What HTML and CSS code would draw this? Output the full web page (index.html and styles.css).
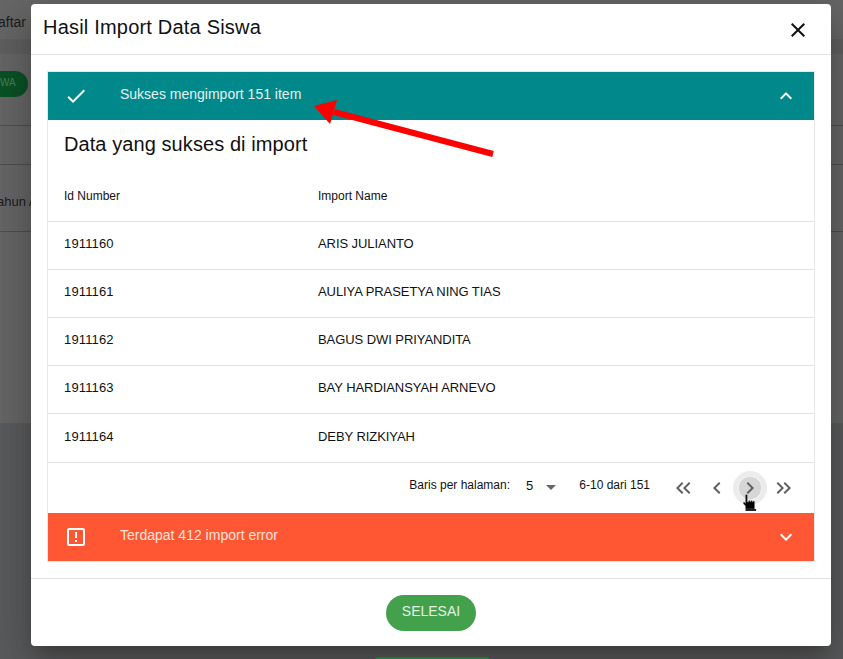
FILE: index.html
```html
<!DOCTYPE html>
<html lang="id">

<head>
    <meta charset="UTF-8">
    <title>Hasil Import Data Siswa</title>
    <link rel="stylesheet" href="styles.css">
</head>

<body>
    <div class="page">
        <div class="page-tabs"><span class="tab-label">aftar S</span></div>
        <div class="page-actions"><span class="pill">WA</span></div>
        <div class="page-row"></div>
        <div class="page-row page-row-text"><span class="row-label">ahun A</span></div>
        <div class="page-fill"></div>
    </div>
    <div class="page-bottom-btn"></div>

    <div class="modal">
        <div class="modal-header">
            <h2>Hasil Import Data Siswa</h2>
            <svg class="close-icon" width="24" height="24" viewBox="0 0 24 24">
                <path d="M19 6.41 17.59 5 12 10.59 6.41 5 5 6.41 10.59 12 5 17.59 6.41 19 12 13.41 17.59 19 19 17.59 13.41 12z" />
            </svg>
        </div>

        <div class="modal-body">
            <div class="accordion">
                <div class="acc-head acc-success">
                    <svg class="acc-icon" width="24" height="24" viewBox="0 0 24 24">
                        <path d="M9 16.2 4.8 12l-1.4 1.4L9 19 21 7l-1.4-1.4z" />
                    </svg>
                    <span class="acc-title">Sukses mengimport 151 item</span>
                    <svg class="acc-arrow" width="24" height="24" viewBox="0 0 24 24">
                        <path d="M12 8l-6 6 1.41 1.41L12 10.83l4.59 4.58L18 14z" />
                    </svg>
                </div>

                <div class="acc-content">
                    <h3>Data yang sukses di import</h3>
                    <div class="table-row table-head">
                        <span class="col-id">Id Number</span>
                        <span>Import Name</span>
                    </div>
                    <div class="table-row">
                        <span class="col-id">1911160</span>
                        <span class="col-name">ARIS JULIANTO</span>
                    </div>
                    <div class="table-row">
                        <span class="col-id">1911161</span>
                        <span class="col-name">AULIYA PRASETYA NING TIAS</span>
                    </div>
                    <div class="table-row">
                        <span class="col-id">1911162</span>
                        <span class="col-name">BAGUS DWI PRIYANDITA</span>
                    </div>
                    <div class="table-row">
                        <span class="col-id">1911163</span>
                        <span class="col-name">BAY HARDIANSYAH ARNEVO</span>
                    </div>
                    <div class="table-row table-row-last">
                        <span class="col-id">1911164</span>
                        <span class="col-name">DEBY RIZKIYAH</span>
                    </div>

                    <div class="pagination">
                        <span class="per-page">Baris per halaman:</span>
                        <span class="per-value">5</span>
                        <span class="per-caret"></span>
                        <span class="range">6-10 dari 151</span>
                        <div class="pager">
                            <span class="pager-btn">
                                <svg width="24" height="24" viewBox="0 0 24 24">
                                    <path d="M11.4 7.4 10 6l-6 6 6 6 1.4-1.4L6.8 12z" />
                                    <path d="M18.4 7.4 17 6l-6 6 6 6 1.4-1.4L13.8 12z" />
                                </svg>
                            </span>
                            <span class="pager-btn">
                                <svg width="24" height="24" viewBox="0 0 24 24">
                                    <path d="M15.41 7.41 14 6l-6 6 6 6 1.41-1.41L10.83 12z" />
                                </svg>
                            </span>
                            <span class="pager-btn pager-hover">
                                <svg width="24" height="24" viewBox="0 0 24 24">
                                    <path d="M10 6 8.59 7.41 13.17 12l-4.58 4.59L10 18l6-6z" />
                                </svg>
                            </span>
                            <span class="pager-btn">
                                <svg width="24" height="24" viewBox="0 0 24 24">
                                    <path d="M7 6 5.6 7.4 10.2 12l-4.6 4.6L7 18l6-6z" />
                                    <path d="M14 6l-1.4 1.4 4.6 4.6-4.6 4.6L14 18l6-6z" />
                                </svg>
                            </span>
                        </div>
                    </div>
                </div>

                <div class="acc-head acc-error">
                    <svg class="acc-icon" width="24" height="24" viewBox="0 0 24 24">
                        <path d="M19 5v14H5V5h14m0-2H5c-1.1 0-2 .9-2 2v14c0 1.1.9 2 2 2h14c1.1 0 2-.9 2-2V5c0-1.1-.9-2-2-2z" />
                        <path d="M11 7h2v6h-2zM11 15h2v2h-2z" />
                    </svg>
                    <span class="acc-title">Terdapat 412 import error</span>
                    <svg class="acc-arrow" width="24" height="24" viewBox="0 0 24 24">
                        <path d="M16.59 8.59 12 13.17 7.41 8.59 6 10l6 6 6-6z" />
                    </svg>
                </div>
            </div>
        </div>

        <div class="modal-footer">
            <button class="done-btn">SELESAI</button>
        </div>

        <!-- panah merah dari screenshot -->
        <svg class="red-arrow" width="190" height="70" viewBox="0 0 190 70">
            <path d="M179 55 20 13" stroke="#ff0000" stroke-width="6" fill="none" />
            <path d="M0 7 23 1 16 25z" fill="#ff0000" />
        </svg>

        <svg class="hand-cursor" width="16" height="18" viewBox="0 0 16 18">
            <path d="M3.5 1.2c0-1.100 1.800-1.100 1.800 0V8h1.200V6.900c.3-.7 1.400-.7 1.600 0V8h.6V7.100c.3-.7 1.400-.7 1.600 0V8h.6v-.6c.3-.6 1.500-.5 1.700.3V15H3.500v-3L1.500 9.800c-.7-1 .4-1.900 1.200-1.200l.8.800z" fill="#000" stroke="#8a8a8a" stroke-width="0.5" />
            <path d="M3.500 15h10.600v2H3.500z" fill="#222" />
        </svg>
    </div>
</body>

</html>
```

FILE: styles.css
```css
* {
    box-sizing: border-box;
}

html,
body {
    margin: 0;
    height: 100%;
}

body {
    font-family: "Liberation Sans", Arial, sans-serif;
    background: #5a5b5c;
    overflow: hidden;
}

.page {
    display: flex;
    flex-direction: column;
    height: 423px;
    background: #666;
    color: #1c1c1c;
    font-size: 14px;
}

.page-tabs {
    height: 39px;
    padding-top: 14px;
    background: #666;
}

.tab-label {
    display: block;
    line-height: 16px;
    text-indent: -2px;
    white-space: nowrap;
}

.page-actions {
    height: 87px;
    padding-top: 32px;
    background: linear-gradient(#5f5f5f 15px, #666 15px);
    border-bottom: 1px solid #4f4f4f;
}

.pill {
    display: block;
    width: 28px;
    height: 26px;
    border-radius: 0 13px 13px 0;
    background: #0b5225;
    color: #46805c;
    font-size: 10px;
    line-height: 24px;
    overflow: hidden;
}

.page-row {
    height: 39px;
    border-bottom: 1px solid #4f4f4f;
}

.page-row-text {
    height: 67px;
    padding-top: 29px;
}

.row-label {
    display: block;
    font-size: 13px;
    line-height: 16px;
    text-indent: -3px;
    white-space: nowrap;
}

.page-fill {
    flex: 1;
}

.page-bottom-btn {
    position: absolute;
    left: 375px;
    top: 657px;
    width: 115px;
    height: 12px;
    border-radius: 4px 4px 0 0;
    background: #22a04a;
}

.modal {
    position: absolute;
    left: 31px;
    top: 4px;
    width: 800px;
    height: 642px;
    display: flex;
    flex-direction: column;
    background: #fff;
    border-radius: 4px;
    box-shadow: 0 11px 15px -7px rgba(0, 0, 0, 0.2), 0 24px 38px 3px rgba(0, 0, 0, 0.14), 0 9px 46px 8px rgba(0, 0, 0, 0.12);
    color: #111;
}

.modal-header {
    display: flex;
    align-items: center;
    justify-content: space-between;
    height: 51px;
    padding: 0 21px 0 12px;
    border-bottom: 1px solid #e2e2e2;
}

.modal-header h2 {
    margin: 0 0 4px;
    font-size: 20px;
    font-weight: 400;
    letter-spacing: 0.2px;
}

.close-icon {
    margin-top: 2px;
    fill: #111;
}

.modal-body {
    flex: 1;
    padding: 16px 16px 0;
}

.accordion {
    border: 1px solid #e8e8e8;
}

.acc-head {
    display: flex;
    align-items: center;
    height: 48px;
    padding: 0 16px;
    color: #e3f3f2;
    font-size: 14px;
}

.acc-success {
    background: #00888a;
}

.acc-error {
    background: #ff5733;
    color: #fde3dc;
}

.acc-icon {
    fill: #fff;
    flex: none;
}

.acc-title {
    flex: 1;
    margin: -4px 0 0 32px;
}

.acc-arrow {
    fill: #fff;
}

.acc-content {
    padding-top: 1px;
}

.acc-content h3 {
    margin: 12px 16px 0;
    font-size: 20px;
    font-weight: 400;
    line-height: 23px;
    letter-spacing: 0.08px;
}

.table-row {
    display: flex;
    align-items: center;
    height: 48px;
    padding: 0 16px 4px;
    border-bottom: 1px solid #e2e2e2;
    font-size: 13px;
}

.table-row-last {
    height: 49px;
}

.table-head {
    height: 50px;
    margin-top: 16px;
    padding-bottom: 2px;
    font-size: 12px;
}

.col-id {
    width: 254px;
    letter-spacing: 0.15px;
}

.table-head .col-id {
    letter-spacing: 0;
}

.col-name {
    letter-spacing: -0.07px;
}

.pagination {
    display: flex;
    align-items: center;
    justify-content: flex-end;
    height: 50px;
    padding-right: 19px;
    font-size: 12px;
}

.per-page {
    margin-top: -6px;
}

.per-value {
    margin: -6px 0 0 16px;
    font-size: 13px;
}

.per-caret {
    width: 0;
    height: 0;
    margin: -1px 0 0 13px;
    border: 5px solid transparent;
    border-top-color: #666;
    border-bottom-width: 0;
}

.range {
    margin: -6px 0 0 23px;
}

.pager {
    display: flex;
    gap: 9px;
    margin-left: 22px;
}

.pager-btn {
    display: flex;
    align-items: center;
    justify-content: center;
    width: 24px;
    height: 24px;
    fill: #5f5f5f;
}

.pager-hover {
    border-radius: 50%;
    background: radial-gradient(#d6d6d6 11px, #ececec 11px);
    box-shadow: 0 0 0 5px #ececec;
}

.modal-footer {
    display: flex;
    justify-content: center;
    align-items: flex-start;
    height: 68px;
    padding-top: 16px;
    border-top: 1px solid #e2e2e2;
}

.done-btn {
    width: 90px;
    height: 36px;
    border: none;
    border-radius: 18px;
    background: #43a04b;
    color: #e2f2e3;
    font-family: inherit;
    font-size: 14px;
    padding: 0 0 4px;
}

.red-arrow {
    position: absolute;
    left: 283px;
    top: 95px;
}

.hand-cursor {
    position: absolute;
    left: 711px;
    top: 490px;
}
```
